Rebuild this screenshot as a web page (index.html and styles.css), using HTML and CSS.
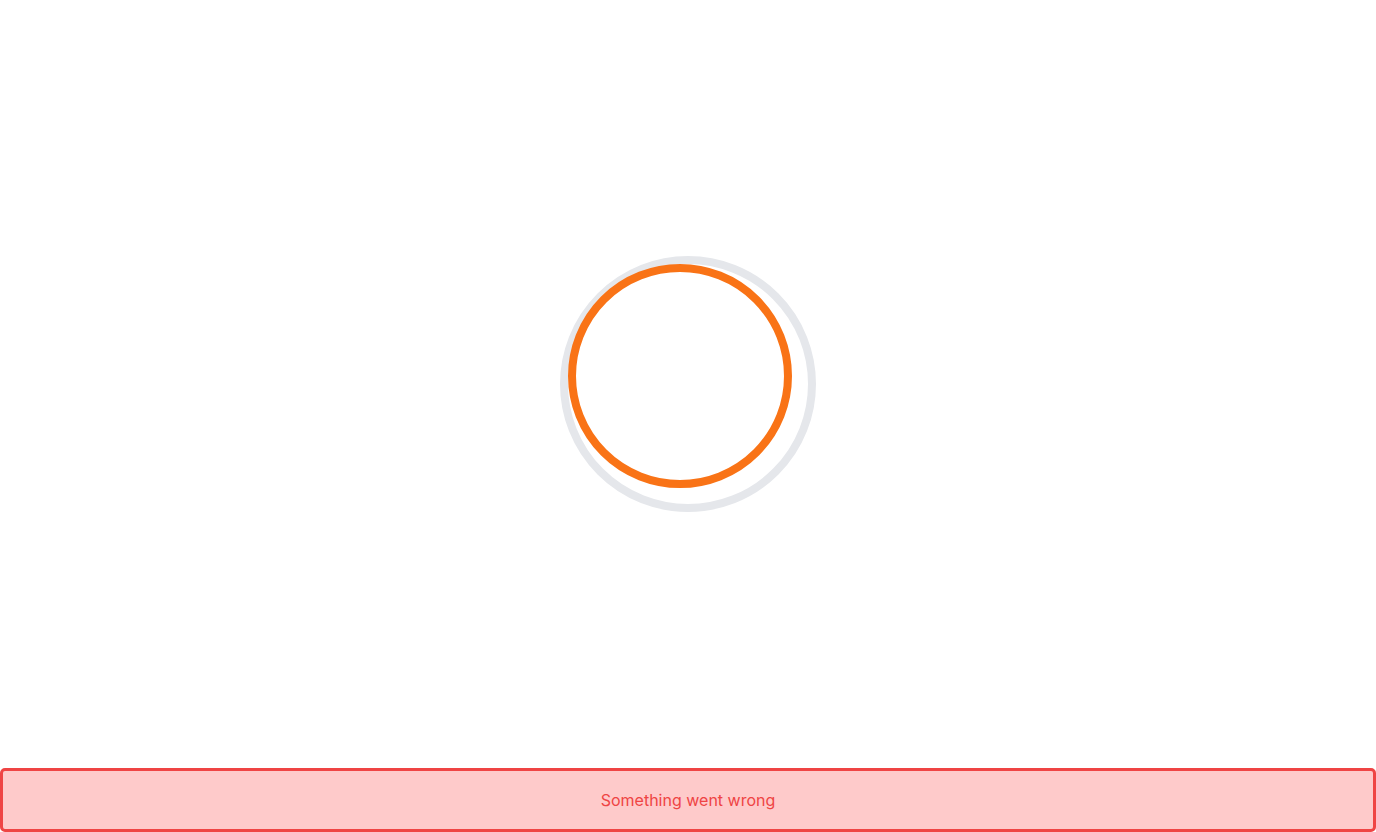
FILE: index.html
```html
<!DOCTYPE html>
<html lang="en">
<head>
<meta charset="utf-8">
<title>Loading</title>
<link rel="stylesheet" href="styles.css">
</head>
<body>
<div class="page">
  <main class="main">
    <div class="spinner">
      <div class="spinner-arc"></div>
    </div>
  </main>
  <div class="alert" role="alert">Something went wrong</div>
</div>
</body>
</html>
```

FILE: styles.css
```css
html, body {
  margin: 0;
  padding: 0;
  background: #ffffff;
  font-family: Inter, "Noto Sans", sans-serif;
}
.page {
  height: 832px;
  display: flex;
  flex-direction: column;
}
.main {
  flex: 1;
  display: flex;
  align-items: center;
  justify-content: center;
}
.spinner {
  position: relative;
  width: 256px;
  height: 256px;
  box-sizing: border-box;
  border: 8px solid #e5e7eb;
  border-radius: 50%;
}
.spinner-arc {
  position: absolute;
  top: 0;
  left: 0;
  width: 224px;
  height: 224px;
  box-sizing: border-box;
  border: 8px solid #f97316;
  border-radius: 50%;
}
.alert {
  height: 64px;
  box-sizing: border-box;
  border: 3px solid #ef4444;
  border-radius: 5px;
  background: #fecaca;
  color: #ef4444;
  font-size: 16px;
  display: flex;
  align-items: center;
  justify-content: center;
}
```
